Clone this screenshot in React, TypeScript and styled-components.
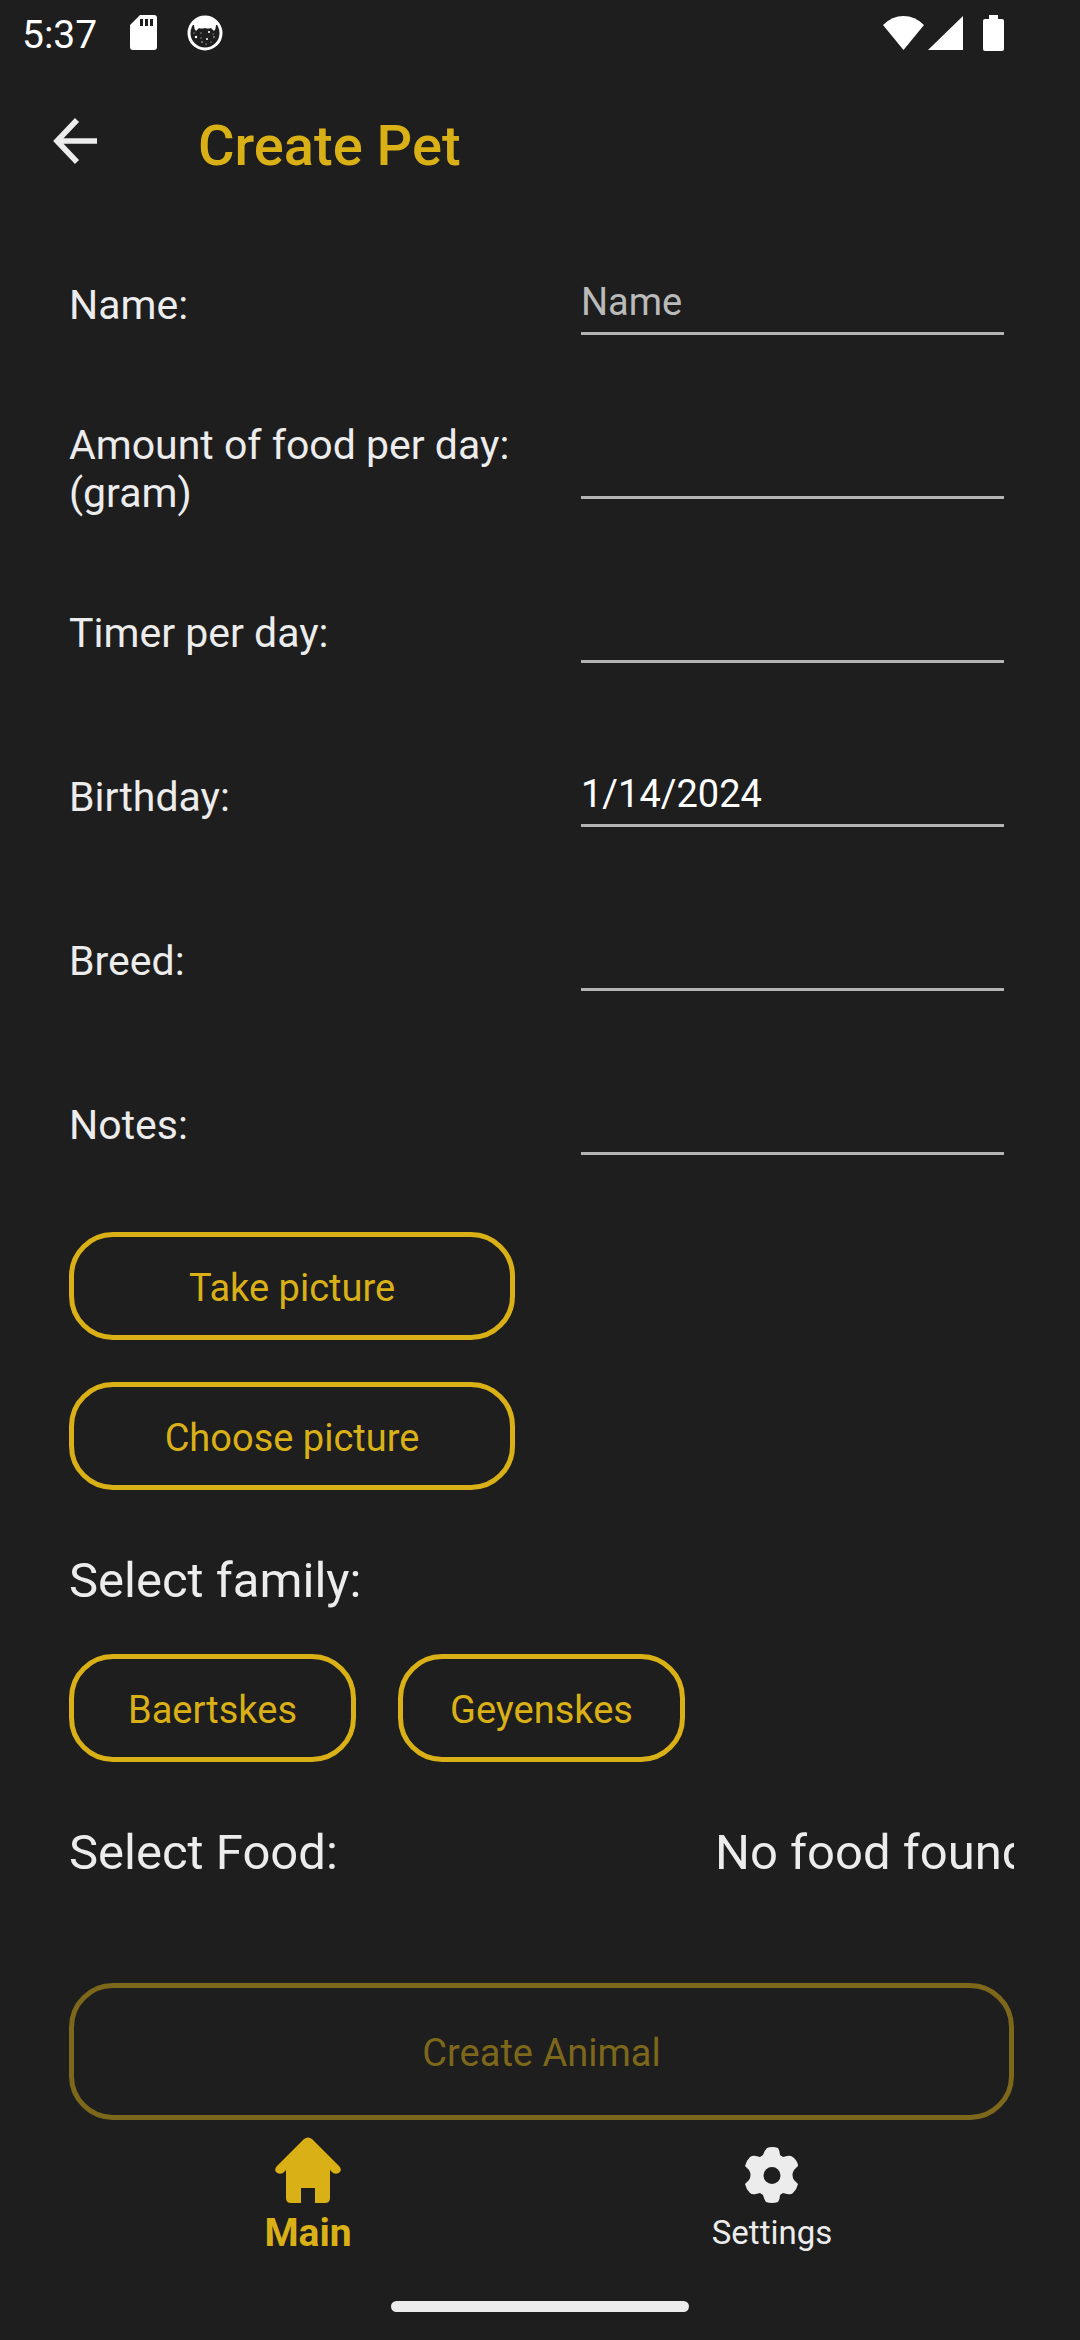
import React, { useState } from "react";
import styled, { createGlobalStyle } from "styled-components";

const GOLD = "#dab017";
const INK = "#ececec";
const BACKGROUND = "#1e1e1e";

const GlobalStyle = createGlobalStyle`
  *, *::before, *::after { box-sizing: border-box; }
  body {
    margin: 0;
    background: ${BACKGROUND};
    color: ${INK};
    font-family: Roboto, "Noto Sans", sans-serif;
  }
  button, input { font: inherit; }
`;

const Screen = styled.div`
  display: flex;
  flex-direction: column;
  min-height: 100vh;
  background: ${BACKGROUND};
`;

const StatusBar = styled.div`
  display: flex;
  align-items: center;
  justify-content: space-between;
  height: 66px;
  padding: 0 76px 0 22px;
  color: #fff;
`;

const StatusGroup = styled.div<{ $gap: number }>`
  display: flex;
  align-items: center;
  gap: ${({ $gap }) => $gap}px;
`;

const Clock = styled.time`
  padding-top: 4px;
  font-size: 39px;
  line-height: 48px;
  margin-right: 3px;
`;

const AppBar = styled.header`
  display: flex;
  align-items: center;
  gap: 100px;
  height: 158px;
  padding: 0 48px 0 49px;
`;

const BackButton = styled.button`
  display: flex;
  padding: 0 0 8px;
  border: 0;
  background: none;
  color: ${INK};
`;

const Title = styled.h1`
  margin: 0;
  padding-top: 2px;
  color: ${GOLD};
  font-size: 56px;
  font-weight: 500;
  line-height: 64px;
`;

const Form = styled.form`
  display: flex;
  flex: 1;
  flex-direction: column;
  padding: 20px 66px 0 69px;
`;

const Fields = styled.div`
  display: grid;
  gap: 42px;
  margin-bottom: 46px;
`;

const TwoColumns = styled.div`
  display: grid;
  grid-template-columns: minmax(0, 446fr) minmax(0, 443fr);
  column-gap: 56px;
  align-items: center;
`;

const FieldRow = styled(TwoColumns)`
  min-height: 122px;
`;

const FieldLabel = styled.label`
  font-size: 41px;
  line-height: 48px;
  white-space: pre-line;
`;

const FieldInput = styled.input`
  width: auto;
  min-width: 0;
  height: 60px;
  margin: 0 10px;
  padding: 0 0 4px;
  border: 0;
  border-bottom: 3px solid #b4b4b4;
  border-radius: 0;
  outline: 0;
  background: transparent;
  color: #fff;
  font-size: 38px;
  line-height: 48px;

  &::placeholder { color: #bababa; opacity: 1; }
`;

const PictureButtons = styled.div`
  display: grid;
  gap: 42px;
`;

const OutlineButton = styled.button<{ $tall?: boolean }>`
  height: ${({ $tall }) => ($tall ? 137 : 108)}px;
  padding: 3px 0 0;
  border: 5px solid ${GOLD};
  border-radius: 44px;
  background: none;
  color: ${GOLD};
  font-size: 38px;
  line-height: 48px;

  &:disabled { border-color: #7c671b; color: #7c671b; }
`;

const SectionTitle = styled.h2`
  margin: 0;
  font-size: 49px;
  font-weight: 400;
  line-height: 60px;
  white-space: nowrap;
`;

const FamilySection = styled.section`
  display: grid;
  gap: 43px;
  margin-top: 61px;
`;

const FamilyList = styled.div`
  display: flex;
  gap: 42px;

  ${OutlineButton} { width: 287px; }
`;

const FoodRow = styled.section`
  display: grid;
  grid-template-columns: minmax(0, 646fr) minmax(0, 299fr);
  margin: 61px 0 100px;
`;

const FoodStatus = styled.p`
  margin: 0;
  overflow: hidden;
  font-size: 49px;
  line-height: 60px;
  white-space: nowrap;
`;

const TabBar = styled.nav`
  display: grid;
  grid-template-columns: 1fr 1fr;
  height: 144px;
  padding: 0 76px 7px;
`;

const Tab = styled.a<{ $active?: boolean }>`
  display: flex;
  flex-direction: column;
  align-items: center;
  justify-content: flex-end;
  gap: 6px;
  color: ${({ $active }) => ($active ? GOLD : INK)};
  font-size: ${({ $active }) => ($active ? 39 : 33)}px;
  font-weight: ${({ $active }) => ($active ? 700 : 400)};
  line-height: 48px;
  text-decoration: none;
`;

const GestureArea = styled.div`
  display: flex;
  justify-content: center;
  padding: 37px 0 28px;
`;

const GestureHandle = styled.div`
  width: 298px;
  height: 11px;
  border-radius: 6px;
  background: ${INK};
`;

const SdCardIcon = () => (
  <svg width="27" height="36" viewBox="0 0 27 36" aria-hidden="true">
    <path
      fill="currentColor"
      fillRule="evenodd"
      d="M10 0H24Q27 0 27 3V32Q27 35 24 35H3Q0 35 0 32V10ZM10 4V11H13V4ZM15 4V11H18V4ZM20 4V11H23V4Z"
    />
  </svg>
);

const CatBadgeIcon = () => (
  <svg width="36" height="36" viewBox="0 0 36 36" aria-hidden="true">
    <circle cx="18" cy="18" r="16" fill="none" stroke="currentColor" strokeWidth="3" />
    <path
      fill="currentColor"
      d="M5 10Q9 2 18 2T31 10L29 10Q29 14 27 16L24 13Q21 14 18 13Q14 14 12 13L9 16Q7 14 7 10Z"
    />
    <g fill="currentColor">
      <circle cx="9" cy="22" r="1.2" />
      <circle cx="22" cy="17" r="1.1" />
      <circle cx="20" cy="24" r="1" />
      <circle cx="14" cy="18" r=".6" />
      <circle cx="15" cy="27" r=".7" />
      <circle cx="27" cy="22" r=".7" />
      <circle cx="26" cy="19" r=".5" />
      <circle cx="19" cy="29" r=".6" />
      <circle cx="14" cy="23" r=".5" />
      <circle cx="7" cy="18" r=".5" />
      <circle cx="24" cy="27" r=".5" />
    </g>
  </svg>
);

const WifiIcon = () => (
  <svg width="41" height="36" viewBox="0 0 41 36" aria-hidden="true">
    <path fill="currentColor" d="M0 10Q9 1 20.500 1T41 10L20.500 35Z" />
  </svg>
);

const SignalIcon = () => (
  <svg width="35" height="36" viewBox="0 0 35 36" aria-hidden="true">
    <path fill="currentColor" d="M35 1V35H0Z" />
  </svg>
);

const BatteryIcon = () => (
  <svg width="21" height="36" viewBox="0 0 21 36" aria-hidden="true">
    <path
      fill="currentColor"
      d="M6 0H15V4H19Q21 4 21 6V34Q21 36 19 36H2Q0 36 0 34V6Q0 4 2 4H6Z"
    />
  </svg>
);

const BackIcon = () => (
  <svg width="49" height="46" viewBox="0 0 49 46" aria-hidden="true">
    <path d="M28 2L8 23L28 44M8 23H48" fill="none" stroke="currentColor" strokeWidth="5.600" />
  </svg>
);

const HomeIcon = () => (
  <svg width="66" height="66" viewBox="0 0 66 66" aria-hidden="true">
    <path
      fill="currentColor"
      d="M29 2Q33-1 37 2L64 29Q67 32 65 35Q62 38 58 36L55 33V61Q55 66 50 66H40V51H26V66H16Q11 66 11 61V33L8 36Q4 38 1 35Q-1 32 2 29Z"
    />
  </svg>
);

const GearIcon = () => (
  <svg width="54" height="56" viewBox="0 0 54 56" aria-hidden="true">
    <path
      fill="currentColor"
      fillRule="evenodd"
      d="M22 1Q27-1 33 1Q35 4 35 8L38 10L42 9Q46 8 49 11Q53 15 53 19L49 23Q46 28 49 33L53 37Q52 42 48 46Q46 48 42 47L38 46L35 48Q35 52 33 55Q27 57 21 55Q19 52 18 48L15 46L11 47Q7 48 5 46Q1 42 0 37L4 33Q7 28 4 23L0 19Q1 14 5 10Q8 8 11 9L15 10L18 8Q19 4 22 1ZM27 20A8.500 8.500 0 1 0 27 37A8.500 8.500 0 1 0 27 20Z"
    />
  </svg>
);

const FIELDS = [
  { id: "name", label: "Name:", placeholder: "Name" },
  { id: "food", label: "Amount of food per day:\n(gram)" },
  { id: "timer", label: "Timer per day:" },
  { id: "birthday", label: "Birthday:" },
  { id: "breed", label: "Breed:" },
  { id: "notes", label: "Notes:" },
];

const FAMILIES = ["Baertskes", "Geyenskes"];

export default function App() {
  const [values, setValues] = useState<Record<string, string>>({ birthday: "1/14/2024" });

  return (
    <>
      <GlobalStyle />
      <Screen>
        <StatusBar>
          <StatusGroup $gap={30}>
            <Clock>5:37</Clock>
            <SdCardIcon />
            <CatBadgeIcon />
          </StatusGroup>
          <StatusGroup $gap={20}>
            <StatusGroup $gap={4}>
              <WifiIcon />
              <SignalIcon />
            </StatusGroup>
            <BatteryIcon />
          </StatusGroup>
        </StatusBar>

        <AppBar>
          <BackButton type="button" aria-label="Back">
            <BackIcon />
          </BackButton>
          <Title>Create Pet</Title>
        </AppBar>

        <Form onSubmit={(event) => event.preventDefault()}>
          <Fields>
            {FIELDS.map(({ id, label, placeholder }) => (
              <FieldRow key={id}>
                <FieldLabel htmlFor={id}>{label}</FieldLabel>
                <FieldInput
                  id={id}
                  type="text"
                  placeholder={placeholder}
                  value={values[id] ?? ""}
                  onChange={(event) => setValues({ ...values, [id]: event.target.value })}
                />
              </FieldRow>
            ))}
          </Fields>

          <TwoColumns>
            <PictureButtons>
              <OutlineButton type="button">Take picture</OutlineButton>
              <OutlineButton type="button">Choose picture</OutlineButton>
            </PictureButtons>
          </TwoColumns>

          <FamilySection>
            <SectionTitle>Select family:</SectionTitle>
            <FamilyList>
              {FAMILIES.map((family) => (
                <OutlineButton key={family} type="button">
                  {family}
                </OutlineButton>
              ))}
            </FamilyList>
          </FamilySection>

          <FoodRow>
            <SectionTitle>Select Food:</SectionTitle>
            <FoodStatus>No food found</FoodStatus>
          </FoodRow>

          <OutlineButton type="submit" $tall disabled>
            Create Animal
          </OutlineButton>
        </Form>

        <TabBar>
          <Tab href="#main" $active>
            <HomeIcon />
            Main
          </Tab>
          <Tab href="#settings">
            <GearIcon />
            Settings
          </Tab>
        </TabBar>

        <GestureArea>
          <GestureHandle />
        </GestureArea>
      </Screen>
    </>
  );
}
